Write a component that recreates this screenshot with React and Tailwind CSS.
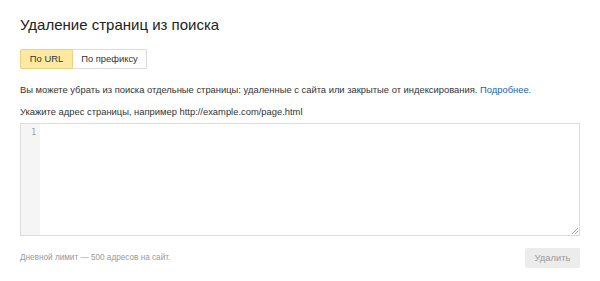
import React from "react";

const App = () => {
  return (
    <div className="w-[600px] h-[281px] bg-white px-5 pt-[15px] font-['Liberation_Sans',Arial,sans-serif] text-[#222]">
      <h1 className="text-[15px] leading-[20px] text-[#222]">Удаление страниц из поиска</h1>

      <div className="mt-[14px] flex">
        <button className="h-5 w-[53px] rounded-l-[2px] border border-[#ecd27e] bg-[#fee9a2] text-[9.4px] text-[#333]">
          По URL
        </button>
        <button className="h-5 w-[74px] rounded-r-[2px] border border-l-0 border-[#dadada] bg-white text-[9.4px] text-[#333]">
          По префиксу
        </button>
      </div>

      <p className="mt-[14px] text-[9.4px] leading-[14px] text-[#333]">
        Вы можете убрать из поиска отдельные страницы: удаленные с сайта или закрытые от индексирования.{" "}
        <a className="text-[#1a5fb4]">Подробнее.</a>
      </p>

      <p className="mt-[8px] text-[9.4px] leading-[14px] text-[#333]">
        Укажите адрес страницы, например http://example.com/page.html
      </p>

      <div className="relative mt-[4px] flex h-[113px] w-[560px] border border-[#dcdcdc]">
        <div className="w-[19px] bg-[#f5f5f5] pr-[4px] pt-[4px] text-right font-['DejaVu_Sans_Mono',monospace] text-[8px] leading-[10px] text-[#999]">
          1
        </div>
        <div className="flex-1" />
        <svg className="absolute bottom-[1px] right-[1px]" width="6" height="6" viewBox="0 0 6 6">
          <path d="M6 0L0 6M6 3L3 6" stroke="#aaa" strokeWidth="1" />
        </svg>
      </div>

      <div className="mt-[12px] flex items-center justify-between">
        <span className="text-[8.2px] text-[#999]">Дневной лимит — 500 адресов на сайт.</span>
        <button className="h-5 w-[55px] rounded-[2px] bg-[#ececec] text-[9.4px] text-[#999]">Удалить</button>
      </div>
    </div>
  );
};

export default App;
